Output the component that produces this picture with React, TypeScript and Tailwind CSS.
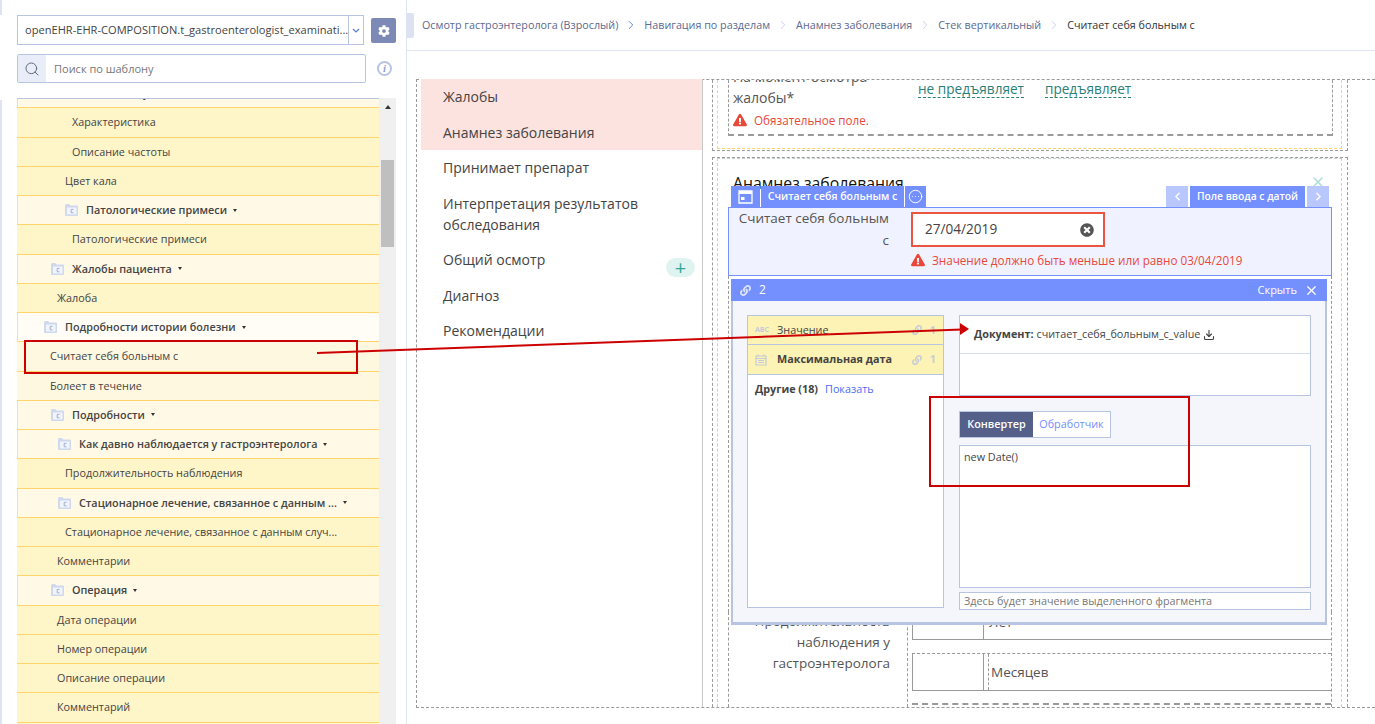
import { CircleEllipsis, ChevronLeft, ChevronRight, Download, Search, X } from "lucide-react";
import { FaCog, FaExclamationTriangle, FaLink, FaTimesCircle } from "react-icons/fa";

type TreeRow = { label: string; pad: string; group?: boolean; light?: boolean };

const treeRows: TreeRow[] = [
  { label: "Частота стула", pad: "pl-[46px]", group: true },
  { label: "Характеристика", pad: "pl-[55px]" },
  { label: "Описание частоты", pad: "pl-[55px]" },
  { label: "Цвет кала", pad: "pl-[48px]" },
  { label: "Патологические примеси", pad: "pl-[46px]", group: true },
  { label: "Патологические примеси", pad: "pl-[55px]" },
  { label: "Жалобы пациента", pad: "pl-[32px]", group: true },
  { label: "Жалоба", pad: "pl-[40px]" },
  { label: "Подробности истории болезни", pad: "pl-[25px]", group: true, light: true },
  { label: "Считает себя больным с", pad: "pl-[33px]", light: true },
  { label: "Болеет в течение", pad: "pl-[33px]", light: true },
  { label: "Подробности", pad: "pl-[32px]", group: true },
  { label: "Как давно наблюдается у гастроэнтеролога", pad: "pl-[39px]", group: true },
  { label: "Продолжительность наблюдения", pad: "pl-[48px]" },
  { label: "Стационарное лечение, связанное с данным ...", pad: "pl-[39px]", group: true },
  { label: "Стационарное лечение, связанное с данным случ...", pad: "pl-[48px]" },
  { label: "Комментарии", pad: "pl-[40px]" },
  { label: "Операция", pad: "pl-[32px]", group: true },
  { label: "Дата операции", pad: "pl-[40px]" },
  { label: "Номер операции", pad: "pl-[40px]" },
  { label: "Описание операции", pad: "pl-[40px]" },
  { label: "Комментарий", pad: "pl-[40px]" },
  { label: "", pad: "pl-[40px]" },
];

const menuItems = [
  { label: "Жалобы", active: true },
  { label: "Анамнез заболевания", active: true },
  { label: "Принимает препарат" },
  { label: "Интерпретация результатов обследования" },
  { label: "Общий осмотр" },
  { label: "Диагноз" },
  { label: "Рекомендации" },
];

const crumbs = ["Осмотр гастроэнтеролога (Взрослый)", "Навигация по разделам", "Анамнез заболевания", "Стек вертикальный"];

function FolderIcon() {
  return (
    <svg className="mr-[7px] h-[14px] w-[15px] shrink-0" viewBox="0 0 15 14" aria-hidden>
      <path d="M1 2.5 Q1 1 2.5 1 H5 L6.5 2.5 H13 Q14 2.5 14 3.5 V12 Q14 13 13 13 H2 Q1 13 1 12 Z" fill="#cfd9ee" />
      <rect x="3" y="4.5" width="9.5" height="7" fill="#f1f4fa" />
      <path d="M9.5 6.4 H7.2 V9.8 H9.5" fill="none" stroke="#9fb0d2" strokeWidth="1" />
    </svg>
  );
}

function Caret() {
  return <span className="ml-[6px] inline-block h-0 w-0 border-x-[2.5px] border-t-[3px] border-x-transparent border-t-[#333]" />;
}

function Tree() {
  return (
    <div className="flex h-[626px] w-[362px] flex-col overflow-hidden border-t border-[#b8c5e0]">
      <div className="-mt-[20px] flex flex-col">
        {treeRows.map((r, i) => (
          <div
            key={i}
            className={[
              "flex h-[29.25px] shrink-0 items-center border-b border-[#fdd56b] text-[10.8px] text-[#444]",
              r.pad,
              r.group ? "border-l border-l-[#dfe1e6] font-semibold" : "",
              r.light ? (r.group ? "bg-[#fffdf6]" : "bg-[#fff8e0]") : r.group ? "bg-[#fff9e6]" : "bg-[#fef5c9]",
            ].join(" ")}
          >
            {r.group && <FolderIcon />}
            <span className="whitespace-nowrap">{r.label}</span>
            {r.group && <Caret />}
          </div>
        ))}
      </div>
    </div>
  );
}

function Sidebar() {
  return (
    <aside className="flex h-full w-[407px] shrink-0 border-r border-[#dfe4f2]">
      <div className="flex w-[2px] shrink-0 flex-col">
        <div className="h-[15px] bg-[#dfe4f2]" />
        <div className="mt-[85px] flex-1 bg-[#dfe4f2]" />
      </div>
      <div className="flex min-w-0 flex-1 flex-col pl-[15px]">
        <div className="mt-[15px] flex items-start">
          <div className="flex h-[30px] w-[347px] border border-[#b8c5e0]">
            <div className="flex w-[331px] shrink-0 items-center overflow-hidden border-r border-[#b8c5e0] pl-[7px] text-[11.1px] text-[#444]">
              <span className="whitespace-nowrap">openEHR-EHR-COMPOSITION.t_gastroenterologist_examinati...</span>
            </div>
            <div className="flex flex-1 items-center justify-center">
              <svg className="h-[5px] w-[8px]" viewBox="0 0 8 5" aria-hidden>
                <path d="M1 1 L4 4 L7 1" fill="none" stroke="#5b7bd8" strokeWidth="1.2" />
              </svg>
            </div>
          </div>
          <div className="ml-[7px] mt-[3px] flex h-[25px] w-[25px] items-center justify-center rounded-[2px] bg-[#7c8ab5] text-white">
            <FaCog className="h-[12px] w-[12px]" />
          </div>
        </div>
        <div className="mt-[9px] flex items-center">
          <div className="flex h-[29px] w-[349px] overflow-hidden rounded-[2px] border border-[#b8c5e0]">
            <div className="flex w-[28px] items-center justify-center bg-[#e9edf7] text-[#5f6b7d]">
              <Search className="h-[16px] w-[16px]" strokeWidth={1.5} />
            </div>
            <div className="flex flex-1 items-center pl-[8px] pt-[1px] text-[11px] text-[#777]">Поиск по шаблону</div>
          </div>
          <div className="ml-[11px] flex h-[15px] w-[15px] items-center justify-center rounded-full border-2 border-[#b8c5e0] font-['Liberation_Serif',serif] text-[11px] font-bold italic text-[#8fa2cc]">
            i
          </div>
        </div>
        <div className="mt-[15px] flex">
          <Tree />
          <div className="flex h-[626px] w-[17px] flex-col items-center bg-[#f0f0f0]">
            <div className="mt-[7px] h-0 w-0 border-x-[3.5px] border-b-[4px] border-x-transparent border-b-[#333]" />
            <div className="mt-[51px] h-[87px] w-[13px] bg-[#bfbfbf]" />
          </div>
        </div>
      </div>
    </aside>
  );
}

function Breadcrumbs() {
  return (
    <div className="flex h-[51px] shrink-0 items-center border-b border-[#dfe4f2]">
      <div className="h-[25px] w-[7px] rounded-r-[2px] bg-[#dde2f3]" />
      <div className="ml-[8px] flex items-center text-[10.75px] text-[#5c6a91]">
        {crumbs.map((c, i) => (
          <div key={c} className="flex items-center">
            <span className="whitespace-nowrap">{c}</span>
            <ChevronRight className={`mx-[6px] h-[14px] w-[14px] ${i === 0 ? "text-[#4f6fe0]" : "text-[#c5cce0]"}`} strokeWidth={1.5} />
          </div>
        ))}
        <span className="whitespace-nowrap text-[#333]">Считает себя больным с</span>
      </div>
    </div>
  );
}

function Menu() {
  return (
    <div className="relative -mt-px ml-[4px] w-[282px] shrink-0 border-r border-[#c9c9c9] text-[14px] leading-[21px] text-[#444]">
      {menuItems.map((m) => (
        <div key={m.label} className={`pb-[7.5px] pl-[22px] pr-[40px] pt-[7px] ${m.active ? "bg-[#fde3df]" : ""}`}>
          {m.label}
        </div>
      ))}
      <div className="absolute left-[245px] top-[179px] flex h-[19px] w-[29px] items-center justify-center rounded-full bg-[#dff3f0] text-[#35a79a]">
        <span className="text-[20px] font-normal leading-none">+</span>
      </div>
    </div>
  );
}

function ErrorLine({ text }: { text: string }) {
  return (
    <div className="flex items-center text-[11.7px] leading-[14px] text-[#e8483a]">
      <FaExclamationTriangle className="mr-[7px] h-[14px] w-[14px]" />
      {text}
    </div>
  );
}

function ComplaintsSection() {
  return (
    <div className="ml-[9px] h-[71px] w-[636px] shrink-0 border-x border-b border-dashed border-[#9a9a9a]">
      <div className="ml-[4px] h-[69px] w-[625px] border-x border-b border-dashed border-[#fdd56b] pl-[10px]">
        <div className="h-[56px] w-[605px] overflow-hidden border-x border-b-2 border-dashed border-[#9a9a9a] pl-[4px]">
          <div className="flex h-[27.5px] items-start">
            <div className="-mt-[14.5px] w-[180px] shrink-0 text-[14px] leading-[21px] text-[#555]">
              На момент осмотра
              <br />
              жалобы*
            </div>
            <span className="-mt-px ml-[5px] h-[19px] border-b border-dashed border-[#2a7f78] text-[13.6px] leading-[19px] text-[#2a7f78]">не предъявляет</span>
            <span className="-mt-px ml-[21px] h-[19px] border-b border-dashed border-[#2a7f78] text-[13.6px] leading-[19px] text-[#2a7f78]">предъявляет</span>
          </div>
          <div className="mt-[5.5px]">
            <ErrorLine text="Обязательное поле." />
          </div>
        </div>
      </div>
    </div>
  );
}

function ToolbarCell({ className, children }: { className: string; children: React.ReactNode }) {
  return <div className={`flex h-[21px] items-center justify-center bg-[#7490ff] text-white ${className}`}>{children}</div>;
}

function DurationBlock() {
  return (
    <div className="flex h-[95px] shrink-0 border-x border-dashed border-[#9a9a9a] text-[13.5px] leading-[21px] text-[#555]">
      <div className="-mt-px w-[161px] shrink-0 text-right">
        Продолжительность
        <br />
        наблюдения у
        <br />
        гастроэнтеролога
      </div>
      <div className="ml-[17px] flex flex-1 flex-col border-l border-dashed border-[#9a9a9a] pl-[4px]">
        <div className="flex h-[28px] shrink-0 border-b border-[#999]">
          <div className="w-[72px] border-x border-[#999]" />
          <div className="ml-[5px] leading-[20px]">Лет</div>
        </div>
        <div className="h-[14px] shrink-0 border-b border-dashed border-[#999]" />
        <div className="flex h-[37px] shrink-0 border-b border-[#999]">
          <div className="w-[72px] border-x border-[#999]" />
          <div className="ml-[4px] flex items-center border-l border-dashed border-[#999] pl-[2px]">Месяцев</div>
        </div>
        <div className="h-[14px] shrink-0 border-b-2 border-dashed border-[#999]" />
      </div>
    </div>
  );
}

function LinkPanel() {
  return (
    <div className="absolute left-[18px] top-[121px] z-20 flex h-[346px] w-[596px] flex-col">
      <div className="flex h-[22px] shrink-0 items-center justify-between bg-[#7490ff] pl-[9px] pr-[8px] text-white">
        <div className="flex items-center text-[12px]">
          <FaLink className="mr-[8px] h-[11px] w-[11px] text-[#dfe5ff]" />2
        </div>
        <div className="flex items-center text-[11px]">
          Скрыть
          <X className="ml-[7px] h-[15px] w-[15px]" strokeWidth={2} />
        </div>
      </div>
      <div className="flex flex-1 gap-[15px] border-x-2 border-b-[3px] border-[#b8c5e0] bg-[#f4f6fb] pl-[14px] pr-[14px] pt-[14px]">
        <div className="flex h-[293px] w-[197px] shrink-0 flex-col border border-[#b8c5e0] bg-white text-[10.8px] text-[#444]">
          <div className="flex h-[29px] items-center border-b border-[#b8c5e0] bg-[#fdf3b5] px-[7px]">
            <span className="w-[22px] text-[7px] font-bold text-[#c5cbd8]">ABC</span>
            <span>Значение</span>
            <FaLink className="ml-auto h-[10px] w-[10px] text-[#c5cbd8]" />
            <span className="ml-[8px] font-bold text-[#c5cbd8]">1</span>
          </div>
          <div className="flex h-[29px] items-center bg-[#fdf3b5] px-[7px] font-bold">
            <svg className="mr-[10px] h-[12px] w-[12px] shrink-0" viewBox="0 0 12 12" aria-hidden>
              <path d="M1 2 H11 V11 H1 Z M1 4.5 H11" fill="none" stroke="#c5cbd8" strokeWidth="1.2" />
              <path d="M3 0.5 V2.5 M9 0.5 V2.5 M3 6.5 H9 M3 8.5 H9" stroke="#c5cbd8" strokeWidth="1.2" />
            </svg>
            <span>Максимальная дата</span>
            <FaLink className="ml-auto h-[10px] w-[10px] text-[#c5cbd8]" />
            <span className="ml-[8px] text-[#c5cbd8]">1</span>
          </div>
          <div className="border-t border-[#b8c5e0] px-[7px] pt-[6px]">
            <span className="font-bold">Другие (18)</span>
            <span className="ml-[7px] text-[#4a6cf0]">Показать</span>
          </div>
        </div>
        <div className="flex w-[352px] shrink-0 flex-col">
          <div className="h-[81px] border border-[#b8c5e0] bg-white">
            <div className="flex h-[38px] items-center border-b border-[#d5dcec] pl-[14px] text-[10.8px] text-[#444]">
              <span className="mr-[3px] font-bold">Документ:</span>
              считает_себя_больным_с_value
              <Download className="ml-[3px] h-[12px] w-[12px]" strokeWidth={2.25} />
            </div>
          </div>
          <div className="mt-[15px] flex h-[27px] w-[152px] border border-[#b8c5e0] bg-white text-[10.8px]">
            <div className="flex w-[73px] items-center justify-center bg-[#546089] font-semibold text-white">Конвертер</div>
            <div className="flex flex-1 items-center justify-center text-[#7490ff]">Обработчик</div>
          </div>
          <div className="mt-[7px] h-[143px] border border-[#b8c5e0] bg-white pl-[4px] pt-[3px] text-[10.8px] text-[#444]">new Date()</div>
          <div className="mt-[4px] flex h-[18px] items-center border border-[#b8c5e0] bg-white pl-[4px] text-[10.8px] text-[#777]">
            Здесь будет значение выделенного фрагмента
          </div>
        </div>
      </div>
    </div>
  );
}

function HistorySection() {
  return (
    <div className="relative ml-[9px] mt-[6px] flex h-[551px] w-[636px] flex-col border-x border-t border-dashed border-[#9a9a9a]">
      <div className="ml-[4px] flex h-full w-[625px] flex-col border-x border-t border-dashed border-[#c9d0d0] pl-[10px] pr-[9px]">
        <div className="relative h-[27px] shrink-0 pl-[5px] pt-[14px] text-[15.8px] leading-[20px] text-[#111]">
          Анамнез заболевания
          <X className="absolute right-[6px] top-[15px] h-[16px] w-[16px] text-[#a9dcd6]" strokeWidth={2} />
        </div>
        <div className="relative z-10 flex h-[21px] shrink-0 px-[3px]">
          <ToolbarCell className="w-[29px]">
            <svg className="h-[15px] w-[15px]" viewBox="0 0 15 15" aria-hidden>
              <path d="M1 2 H14 V14 H1 Z" fill="none" stroke="white" strokeWidth="1.3" />
              <path d="M1 2 H14 V5 H1 Z M3 8 H6.5 V11 H3 Z" fill="white" />
            </svg>
          </ToolbarCell>
          <ToolbarCell className="ml-px w-[143px] text-[10.5px] font-semibold">Считает себя больным с</ToolbarCell>
          <ToolbarCell className="ml-px w-[21px]">
            <CircleEllipsis className="h-[15px] w-[15px]" strokeWidth={1.5} />
          </ToolbarCell>
          <div className="ml-auto flex">
            <ToolbarCell className="w-[22px] !bg-[#b9c7ff]">
              <ChevronLeft className="h-[13px] w-[13px]" strokeWidth={2.5} />
            </ToolbarCell>
            <ToolbarCell className="ml-[2px] w-[115px] text-[10.3px] font-semibold">Поле ввода с датой</ToolbarCell>
            <ToolbarCell className="ml-[2px] w-[22px] !bg-[#b9c7ff]">
              <ChevronRight className="h-[13px] w-[13px]" strokeWidth={2.5} />
            </ToolbarCell>
          </div>
        </div>
        <div className="flex h-[69px] shrink-0 border border-[#7490ff] bg-[#f0f3ff]">
          <div className="-mt-px w-[160px] shrink-0 text-right text-[13.5px] leading-[22px] text-[#555]">
            Считает себя больным
            <br />с
          </div>
          <div className="ml-[22px] pt-[4px]">
            <div className="flex h-[35px] w-[194px] items-center justify-between border-2 border-[#e9553f] bg-white pl-[12px] pr-[9px] text-[13.6px] text-[#444]">
              27/04/2019
              <FaTimesCircle className="h-[14px] w-[14px] text-[#555]" />
            </div>
            <div className="mt-[6px]">
              <ErrorLine text="Значение должно быть меньше или равно 03/04/2019" />
            </div>
          </div>
        </div>
        <div className="flex-1 border-x border-dashed border-[#9a9a9a]" />
        <DurationBlock />
      </div>
      <LinkPanel />
    </div>
  );
}

function Annotations() {
  return (
    <>
      <svg className="pointer-events-none absolute left-0 top-0 z-30 h-[724px] w-[1375px]" viewBox="0 0 1375 724" aria-hidden>
        <path d="M317 353 L962 329.5" stroke="#cc0000" strokeWidth="2" fill="none" />
        <path d="M969 329 L960 323 L960 335 Z" fill="#cc0000" />
      </svg>
      <div className="pointer-events-none absolute left-[24px] top-[340px] z-30 h-[34px] w-[334px] border-2 border-[#cc0000]" />
      <div className="pointer-events-none absolute left-[929px] top-[396px] z-30 h-[91px] w-[261px] border-2 border-[#cc0000]" />
    </>
  );
}

export default function App() {
  return (
    <div className="relative flex h-[724px] w-[1375px] overflow-hidden bg-white font-['Open_Sans',sans-serif]">
      <Sidebar />
      <main className="flex min-w-0 flex-1 flex-col">
        <Breadcrumbs />
        <div className="ml-[9px] mt-[28px] flex h-[629px] shrink-0 border-y border-l border-dashed border-[#9a9a9a]">
          <Menu />
          <div className="flex flex-col">
            <ComplaintsSection />
            <HistorySection />
          </div>
        </div>
      </main>
      <Annotations />
    </div>
  );
}
